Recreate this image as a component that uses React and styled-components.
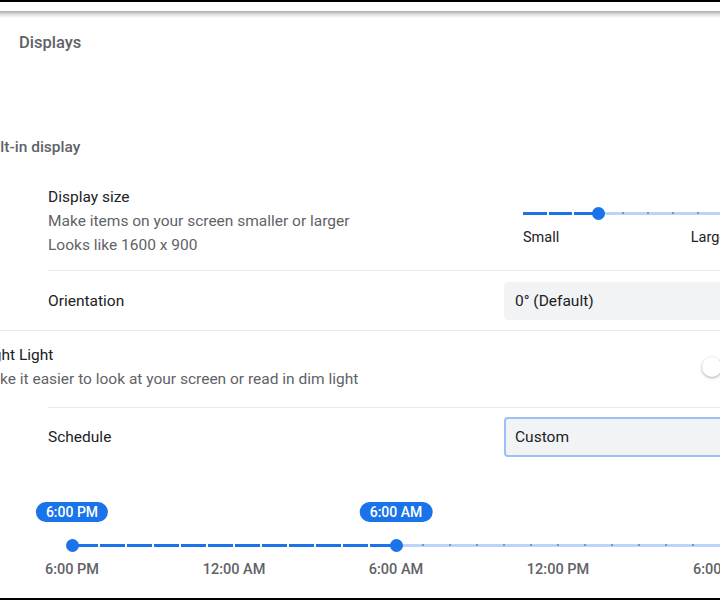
import React from 'react';
import styled, { createGlobalStyle } from 'styled-components';

const GlobalStyle = createGlobalStyle`
  html, body {
    margin: 0;
    padding: 0;
    background: #fff;
  }
  body {
    font-family: Roboto, "Liberation Sans", Arial, sans-serif;
  }
`;

const Frame = styled.div`
  width: 720px;
  height: 600px;
  box-sizing: border-box;
  border-top: 2px solid #000;
  border-bottom: 2px solid #000;
  overflow: hidden;
  display: flex;
  flex-direction: column;
  background: #fff;
`;

const Toolbar = styled.div`
  height: 9px;
  flex-shrink: 0;
  background: #fff;
`;

const ToolbarShadow = styled.div`
  height: 7px;
  flex-shrink: 0;
  background: linear-gradient(#a9a9a9, #dcdcdc 45%, #fff);
`;

const PageTitle = styled.h1`
  margin: 13px 0 0 19px;
  font-size: 16.5px;
  font-weight: 500;
  line-height: 24px;
  color: #5f6368;
`;

const Section = styled.section`
  flex-shrink: 0;
  width: 800px;
  margin: 68px 0 0 -22px;
`;

const SectionHeader = styled.h2`
  margin: 0;
  height: 48px;
  display: flex;
  align-items: center;
  font-size: 15.5px;
  font-weight: 500;
  color: #5f6368;
`;

const Row = styled.div`
  display: flex;
  align-items: ${(p) => p.$align || 'center'};
  margin-left: ${(p) => (p.$indent ? '70px' : '0')};
  padding: ${(p) => p.$pad || '0'};
  min-height: ${(p) => p.$height || 0}px;
  box-sizing: border-box;
  border-top: ${(p) => (p.$divider ? '1px solid #e8eaed' : 'none')};
`;

const TextBlock = styled.div`
  display: flex;
  flex-direction: column;
`;

const Label = styled.div`
  font-size: 15.5px;
  line-height: 24px;
  color: #202124;
`;

const Sublabel = styled.div`
  font-size: 15.5px;
  line-height: 24px;
  color: #5f6368;
  white-space: nowrap;
`;

const Select = styled.div`
  margin-left: auto;
  margin-right: 23px;
  width: 251px;
  height: ${(p) => p.$h}px;
  box-sizing: border-box;
  display: flex;
  align-items: center;
  padding-left: 9px;
  border-radius: 4px;
  background: #f1f3f4;
  border: 2px solid ${(p) => (p.$focused ? '#9cc0f5' : 'transparent')};
  font-size: 15.5px;
  color: #202124;
`;

/* slider drawing */
const SliderBox = styled.div`
  margin-left: ${(p) => (p.$right ? 'auto' : '0')};
  margin-right: ${(p) => p.$mr || 0}px;
  margin-top: ${(p) => p.$mt || 0}px;
  width: ${(p) => p.$w}px;
  flex-shrink: 0;
`;

const TrackArea = styled.div`
  position: relative;
  height: 16px;
  display: flex;
  align-items: center;
`;

const Rail = styled.div`
  position: relative;
  width: 100%;
  height: 3px;
  background: #bcd4f8;
`;

const RailFill = styled.div`
  position: absolute;
  top: 0;
  bottom: 0;
  left: ${(p) => p.$from}px;
  width: ${(p) => p.$to - p.$from}px;
  background: #1a73e8;
`;

const Tick = styled.div`
  position: absolute;
  top: ${(p) => (p.$on ? 0 : 0.5)}px;
  left: ${(p) => p.$x - 1}px;
  width: 2px;
  height: ${(p) => (p.$on ? 3 : 2)}px;
  background: ${(p) => (p.$on ? '#ffffff' : '#6f9ad6')};
`;

const Knob = styled.div`
  position: absolute;
  top: 50%;
  left: ${(p) => p.$x}px;
  width: 13px;
  height: 13px;
  margin: -6.5px 0 0 -6.5px;
  border-radius: 50%;
  background: #1a73e8;
`;

const Slider = ({ width, step, from, to, knobs }) => {
  const ticks = [];
  for (let x = step; x < width; x += step) {
    if (!knobs.includes(x)) ticks.push(x);
  }
  return (
    <TrackArea>
      <Rail>
        <RailFill $from={from} $to={to} />
        {ticks.map((x) => (
          <Tick key={x} $x={x} $on={x > from && x < to} />
        ))}
      </Rail>
      {knobs.map((x) => (
        <Knob key={x} $x={x} />
      ))}
    </TrackArea>
  );
};

const SizeLabels = styled.div`
  display: flex;
  justify-content: space-between;
  margin-top: 7px;
  font-size: 14.5px;
  line-height: 20px;
  color: #202124;
`;

/* toggle */
const Toggle = styled.div`
  position: relative;
  margin-left: auto;
  margin-right: 40px;
  width: 36px;
  height: 20px;
  flex-shrink: 0;
`;

const ToggleBar = styled.div`
  position: absolute;
  left: 4px;
  right: 0;
  top: 3px;
  height: 14px;
  border-radius: 7px;
  background: #bdc1c6;
`;

const ToggleKnob = styled.div`
  position: absolute;
  left: 0;
  top: 0;
  width: 20px;
  height: 20px;
  border-radius: 50%;
  background: #fff;
  box-shadow: 0 1px 3px rgba(60, 64, 67, 0.45);
`;

/* schedule time slider */
const TimeSlider = styled.div`
  position: relative;
  width: 648px;
  margin: 36px 0 0 94px;
  padding-top: 35px;
`;

const Bubble = styled.div`
  position: absolute;
  top: 0;
  left: ${(p) => p.$x}px;
  transform: translateX(-50%);
  height: 20px;
  padding: 0 10px;
  border-radius: 10px;
  background: #1a73e8;
  color: #fff;
  font-size: 14px;
  font-weight: 500;
  line-height: 20px;
  white-space: nowrap;
`;

const TimeLabels = styled.div`
  display: flex;
  margin: 7px 0 0 -81px;
`;

const TimeLabel = styled.div`
  width: 162px;
  flex-shrink: 0;
  text-align: center;
  font-size: 14.5px;
  font-weight: 500;
  line-height: 20px;
  color: #5f6368;
`;

const HOUR = 27;
const timeLabels = ['6:00 PM', '12:00 AM', '6:00 AM', '12:00 PM', '6:00 PM'];

export default function App() {
  return (
    <>
      <GlobalStyle />
      <Frame>
        <Toolbar />
        <ToolbarShadow />
        <PageTitle>Displays</PageTitle>
        <Section>
          <SectionHeader>Built-in display</SectionHeader>

          <Row $indent $align="flex-start" $pad="14px 0 13px">
            <TextBlock>
              <Label>Display size</Label>
              <Sublabel>Make items on your screen smaller or larger</Sublabel>
              <Sublabel>Looks like 1600 x 900</Sublabel>
            </TextBlock>
            <SliderBox $right $mr={51} $mt={20} $w={204}>
              <Slider width={204} step={25} from={0} to={75} knobs={[75]} />
              <SizeLabels>
                <span>Small</span>
                <span>Large</span>
              </SizeLabels>
            </SliderBox>
          </Row>

          <Row $indent $divider $height={60}>
            <Label>Orientation</Label>
            <Select $h={38}>0° (Default)</Select>
          </Row>

          <Row $divider $pad="12px 0 16px" $height={77}>
            <TextBlock>
              <Label>Night Light</Label>
              <Sublabel>Make it easier to look at your screen or read in dim light</Sublabel>
            </TextBlock>
            <Toggle>
              <ToggleBar />
              <ToggleKnob />
            </Toggle>
          </Row>

          <Row $indent $divider $height={59}>
            <Label>Schedule</Label>
            <Select $h={40} $focused>
              Custom
            </Select>
          </Row>

          <TimeSlider>
            <Bubble $x={0}>6:00 PM</Bubble>
            <Bubble $x={12 * HOUR}>6:00 AM</Bubble>
            <Slider width={24 * HOUR} step={HOUR} from={0} to={12 * HOUR} knobs={[0, 12 * HOUR]} />
            <TimeLabels>
              {timeLabels.map((t, i) => (
                <TimeLabel key={i}>{t}</TimeLabel>
              ))}
            </TimeLabels>
          </TimeSlider>
        </Section>
      </Frame>
    </>
  );
}
